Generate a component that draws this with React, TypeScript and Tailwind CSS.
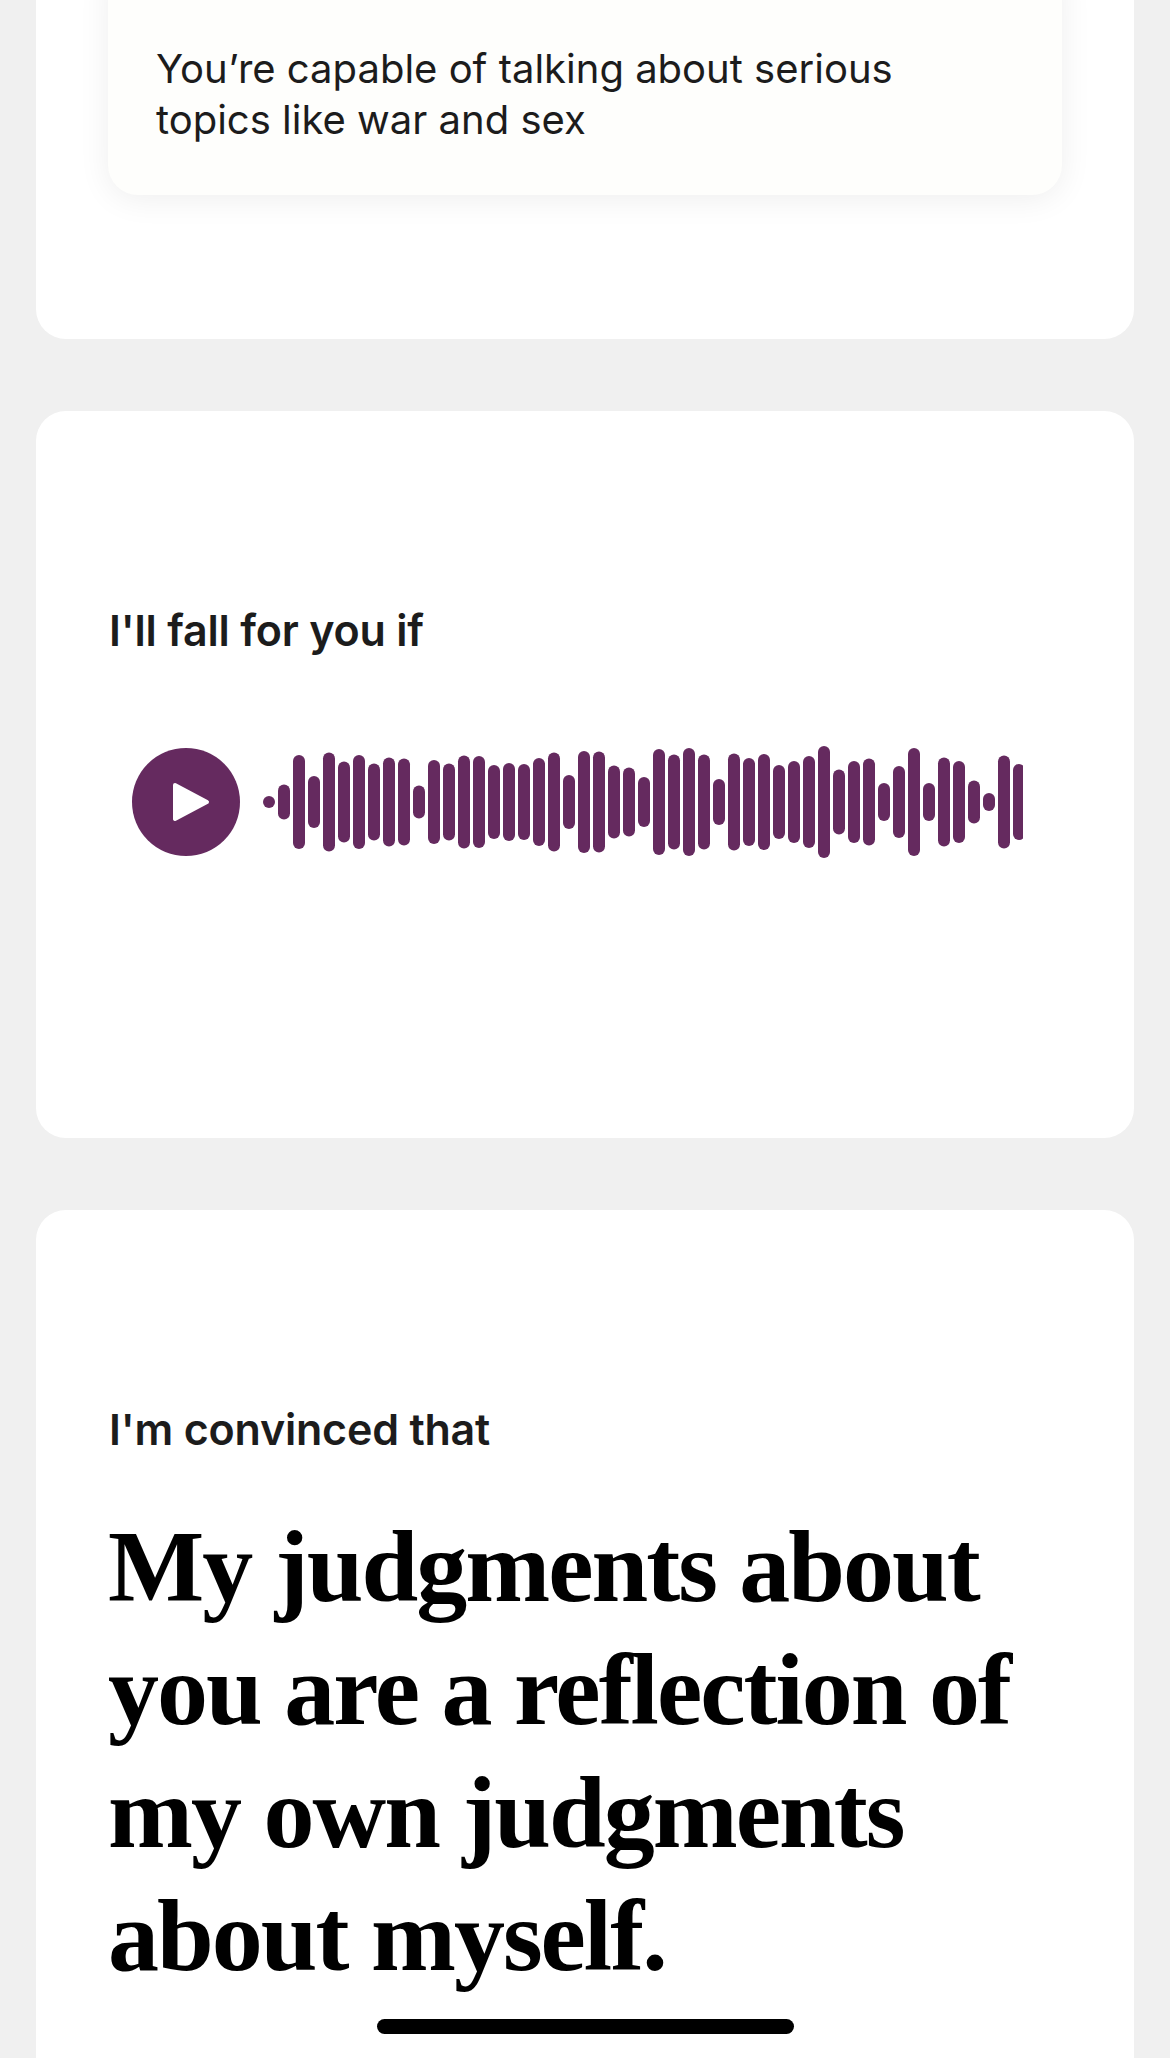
import React from 'react';

const BAR_HEIGHTS = [
  12, 35, 94, 52, 99, 81, 94, 77, 89, 87, 33, 84, 77, 93, 92, 74, 78, 76, 88, 99, 54, 102, 101, 73, 69,
  50, 106, 95, 108, 95, 46, 97, 88, 96, 74, 82, 92, 112, 65, 82, 87, 38, 72, 108, 38, 89, 82, 43, 18, 93, 76,
];

function Waveform() {
  return (
    <svg width="767" height="120" viewBox="0 0 767 120" className="shrink-0">
      {BAR_HEIGHTS.map((h, i) => (
        <rect key={i} x={7 + i * 15} y={60 - h / 2} width="12" height={h} rx="6" fill="#652a5f" />
      ))}
    </svg>
  );
}

function Label({ children }: { children: React.ReactNode }) {
  return <p className="font-['Inter',sans-serif] text-[43px] leading-[52px] font-semibold tracking-[-0.2px] text-[#1c1c1c]">{children}</p>;
}

export default function App() {
  return (
    <div className="relative h-[2058px] overflow-hidden bg-[#f0f0f0] px-[36px]">
      <div className="-mt-[40px] rounded-[30px] bg-white px-[72px] pb-[144px]">
        <div className="rounded-[30px] bg-[#fefefc] px-[48px] pt-[83px] pb-[50px] shadow-[0_4px_32px_rgba(0,0,0,0.07)]">
          <p className="font-['Inter',sans-serif] text-[40px] leading-[51px] text-[#1c1c1c]">
            You’re capable of talking about serious topics like war and sex
          </p>
        </div>
      </div>

      <div className="mt-[72px] h-[727px] rounded-[30px] bg-white px-[73px] pt-[193px]">
        <Label>I'll fall for you if</Label>
        <div className="mt-[86px] flex items-center gap-[16px] pl-[23px]">
          <div className="flex h-[108px] w-[108px] shrink-0 items-center justify-center rounded-full bg-[#652a5f]">
            <svg width="38" height="40" viewBox="0 0 38 40" className="ml-[10px]">
              <path d="M3 3 L35 20 L3 37 Z" fill="#fff" stroke="#fff" strokeWidth="4" strokeLinejoin="round" />
            </svg>
          </div>
          <Waveform />
        </div>
      </div>

      <div className="mt-[72px] h-[1000px] rounded-[30px] bg-white px-[73px] pt-[193px]">
        <Label>I'm convinced that</Label>
        <h2 className="mt-[50px] -ml-[1px] font-['Liberation_Serif',serif] text-[102px] leading-[123px] font-bold tracking-[-2px] text-black [font-variant-ligatures:common-ligatures]">
          My judgments about you are a reflection of my own judgments about myself.
        </h2>
      </div>

      <div className="absolute bottom-[24px] left-[377px] h-[15px] w-[417px] rounded-full bg-black" />
    </div>
  );
}
